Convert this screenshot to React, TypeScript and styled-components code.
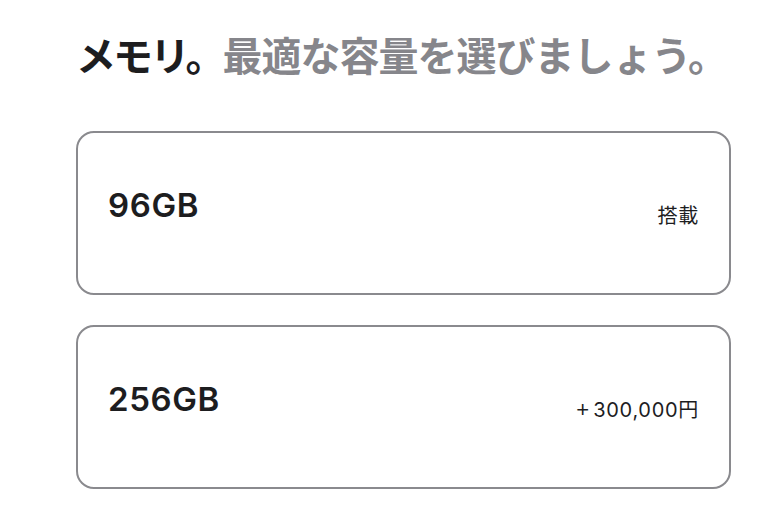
import React from "react";
import styled, { createGlobalStyle } from "styled-components";

const Global = createGlobalStyle`
  html, body { margin: 0; padding: 0; background: #ffffff; }
  body {
    font-family: Inter, "Noto Sans CJK JP", "Noto Sans", sans-serif;
    color: #1d1d1f;
    -webkit-font-smoothing: antialiased;
  }
`;

const Page = styled.main`
  width: 655px;
  padding: 32px 0 0 76px;
`;

const Title = styled.h2`
  margin: 0 0 55px 0;
  font-family: "Noto Sans CJK JP", sans-serif;
  font-size: 40px;
  line-height: 44px;
  font-weight: 700;
  letter-spacing: -3px;
  color: #1d1d1f;
  white-space: nowrap;
`;

const Muted = styled.span`
  color: #86868b;
  letter-spacing: -1px;
`;

const List = styled.div`
  display: flex;
  flex-direction: column;
  gap: 30px;
`;

const Option = styled.div`
  box-sizing: border-box;
  height: 164px;
  border: 2px solid #8a8a8e;
  border-radius: 18px;
  padding: 0 30px 0 30px;
  display: flex;
  align-items: center;
  justify-content: space-between;
`;

const Capacity = styled.span`
  font-family: Inter, sans-serif;
  font-size: 33px;
  line-height: 1;
  font-weight: 600;
  letter-spacing: 0.6px;
  padding-bottom: 15px;
`;

const Price = styled.span`
  font-family: Inter, "Noto Sans CJK JP", sans-serif;
  font-size: 20px;
  line-height: 1;
  font-weight: 400;
  letter-spacing: 0.7px;
  padding-top: 6px;
  white-space: nowrap;
`;

const Sign = styled.span`
  font-family: "Liberation Sans", sans-serif;
  font-size: 22px;
  font-weight: 300;
  margin-right: 4px;
  letter-spacing: 0;
`;

const options = [
  { size: "96GB", sign: "", price: "搭載" },
  { size: "256GB", sign: "+", price: "300,000円" },
];

export default function App() {
  return (
    <>
      <Global />
      <Page>
        <Title>
          メモリ。<Muted>最適な容量を選びましょう。</Muted>
        </Title>
        <List>
          {options.map((o) => (
            <Option key={o.size}>
              <Capacity>{o.size}</Capacity>
              <Price>
                {o.sign && <Sign>{o.sign}</Sign>}
                {o.price}
              </Price>
            </Option>
          ))}
        </List>
      </Page>
    </>
  );
}
